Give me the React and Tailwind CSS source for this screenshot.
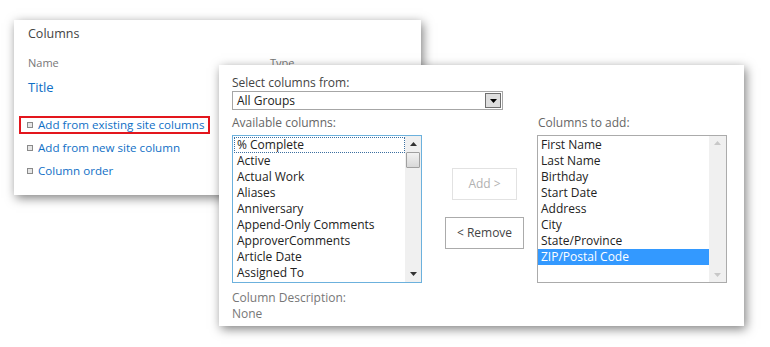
import React from "react";

const font = { fontFamily: '"Open Sans", "Noto Sans", sans-serif' };

function Bullet() {
  return <span className="inline-block w-[6px] h-[6px] border border-[#8a8a8a] bg-[#e6e6e6] shrink-0" />;
}

function LinkRow({ text, boxed }) {
  return (
    <div
      className={
        "ml-[5px] h-[18px] flex items-center gap-[5px] pl-[6px] border-2 " +
        (boxed ? "border-[#e3161d] w-[191px]" : "border-transparent")
      }
    >
      <Bullet />
      <span className="text-[11.6px] leading-[14px] text-[#0f6fc6] whitespace-nowrap">{text}</span>
    </div>
  );
}

function ArrowUp({ color = "#333" }) {
  return (
    <svg width="7" height="4" viewBox="0 0 7 4">
      <path d="M0 4 L3.5 0 L7 4 Z" fill={color} />
    </svg>
  );
}
function ArrowDown({ color = "#333" }) {
  return (
    <svg width="7" height="4" viewBox="0 0 7 4">
      <path d="M0 0 L7 0 L3.5 4 Z" fill={color} />
    </svg>
  );
}

const available = [
  "% Complete",
  "Active",
  "Actual Work",
  "Aliases",
  "Anniversary",
  "Append-Only Comments",
  "ApproverComments",
  "Article Date",
  "Assigned To",
];
const toAdd = [
  "First Name",
  "Last Name",
  "Birthday",
  "Start Date",
  "Address",
  "City",
  "State/Province",
  "ZIP/Postal Code",
];

export default function App() {
  return (
    <div className="relative w-[770px] h-[347px] bg-white overflow-hidden" style={font}>
      {/* Back panel */}
      <div className="absolute left-[14px] top-[20px] w-[407px] h-[175px] bg-white shadow-[2px_3px_10px_rgba(0,0,0,0.5)] pl-[14px]">
        <div className="mt-[5px] text-[12.5px] leading-[17px] text-[#444]">Columns</div>
        <div className="mt-[13px] flex text-[11px] leading-[15px] text-[#777]">
          <span className="w-[242px]">Name</span>
          <span>Type</span>
        </div>
        <div className="mt-[9px] text-[13px] leading-[17px] text-[#0f6fc6]">Title</div>
        <div className="-ml-[14px] mt-[20px] flex flex-col gap-[5px]">
          <LinkRow text="Add from existing site columns" boxed />
          <LinkRow text="Add from new site column" />
          <LinkRow text="Column order" />
        </div>
      </div>

      {/* Front panel */}
      <div className="absolute left-[219px] top-[65px] w-[525px] h-[261px] bg-white shadow-[2px_3px_10px_rgba(0,0,0,0.5)] pl-[13px] pt-[10px] text-[12px]">
        <div className="leading-[16px] text-[#444]">Select columns from:</div>
        <div className="w-[271px] h-[19px] border border-[#a6a6a6] flex items-center justify-between pl-[4px] pr-[1px]">
          <span className="leading-[16px] text-[#222]">All Groups</span>
          <div className="w-[16px] h-[15px] bg-[#dedede] border border-[#6f6f6f] flex items-center justify-center">
            <ArrowDown color="#000" />
          </div>
        </div>
        <div className="flex mt-[5px]">
          {/* left column */}
          <div className="w-[190px]">
            <div className="leading-[16px] text-[#666]">Available columns:</div>
            <div className="mt-[4px] h-[148px] border border-[#6cb1dd] flex">
              <div className="flex-1 pt-[1px] pl-[1px]">
                {available.map((a, i) => (
                  <div
                    key={a}
                    className={
                      "h-[16px] leading-[15px] pl-[3px] text-[#222] whitespace-nowrap " +
                      (i === 0 ? "outline-1 outline-dotted -outline-offset-1 outline-[#3c6fa0]" : "")
                    }
                  >
                    {a}
                  </div>
                ))}
              </div>
              <div className="w-[16px] bg-[#f0f0f0] flex flex-col items-center">
                <div className="h-[16px] flex items-center justify-center">
                  <ArrowUp />
                </div>
                <div className="w-[14px] h-[16px] bg-gradient-to-b from-[#f2f2f2] to-[#d8d8d8] border border-[#a0a0a0] rounded-[1px]" />
                <div className="flex-1" />
                <div className="h-[16px] flex items-center justify-center">
                  <ArrowDown />
                </div>
              </div>
            </div>
            <div className="mt-[7px] leading-[16px] text-[#777]">Column Description:</div>
            <div className="leading-[16px] text-[#777]">None</div>
          </div>

          {/* middle buttons */}
          <div className="w-[115px] pl-[10px] flex flex-col items-center pt-[53px] gap-[17px]">
            <div className="w-[65px] h-[32px] border border-[#e2e2e2] flex items-center justify-center text-[#b1b1b1]">
              Add &gt;
            </div>
            <div className="w-[79px] h-[32px] border border-[#ababab] flex items-center justify-center text-[#444]">
              &lt; Remove
            </div>
          </div>

          {/* right column */}
          <div className="w-[190px]">
            <div className="leading-[16px] text-[#666] pl-[1px]">Columns to add:</div>
            <div className="mt-[4px] h-[148px] border border-[#ababab] flex">
              <div className="flex-1 pt-[1px]">
                {toAdd.map((a, i) => (
                  <div
                    key={a}
                    className={
                      "h-[16px] leading-[16px] pl-[3px] whitespace-nowrap " +
                      (i === 7 ? "bg-[#3399ff] text-white" : "text-[#222]")
                    }
                  >
                    {a}
                  </div>
                ))}
              </div>
              <div className="w-[17px] bg-[#f0f0f0] flex flex-col items-center justify-between py-[5px]">
                <ArrowUp color="#c8c8c8" />
                <ArrowDown color="#c8c8c8" />
              </div>
            </div>
          </div>
        </div>
      </div>
    </div>
  );
}
